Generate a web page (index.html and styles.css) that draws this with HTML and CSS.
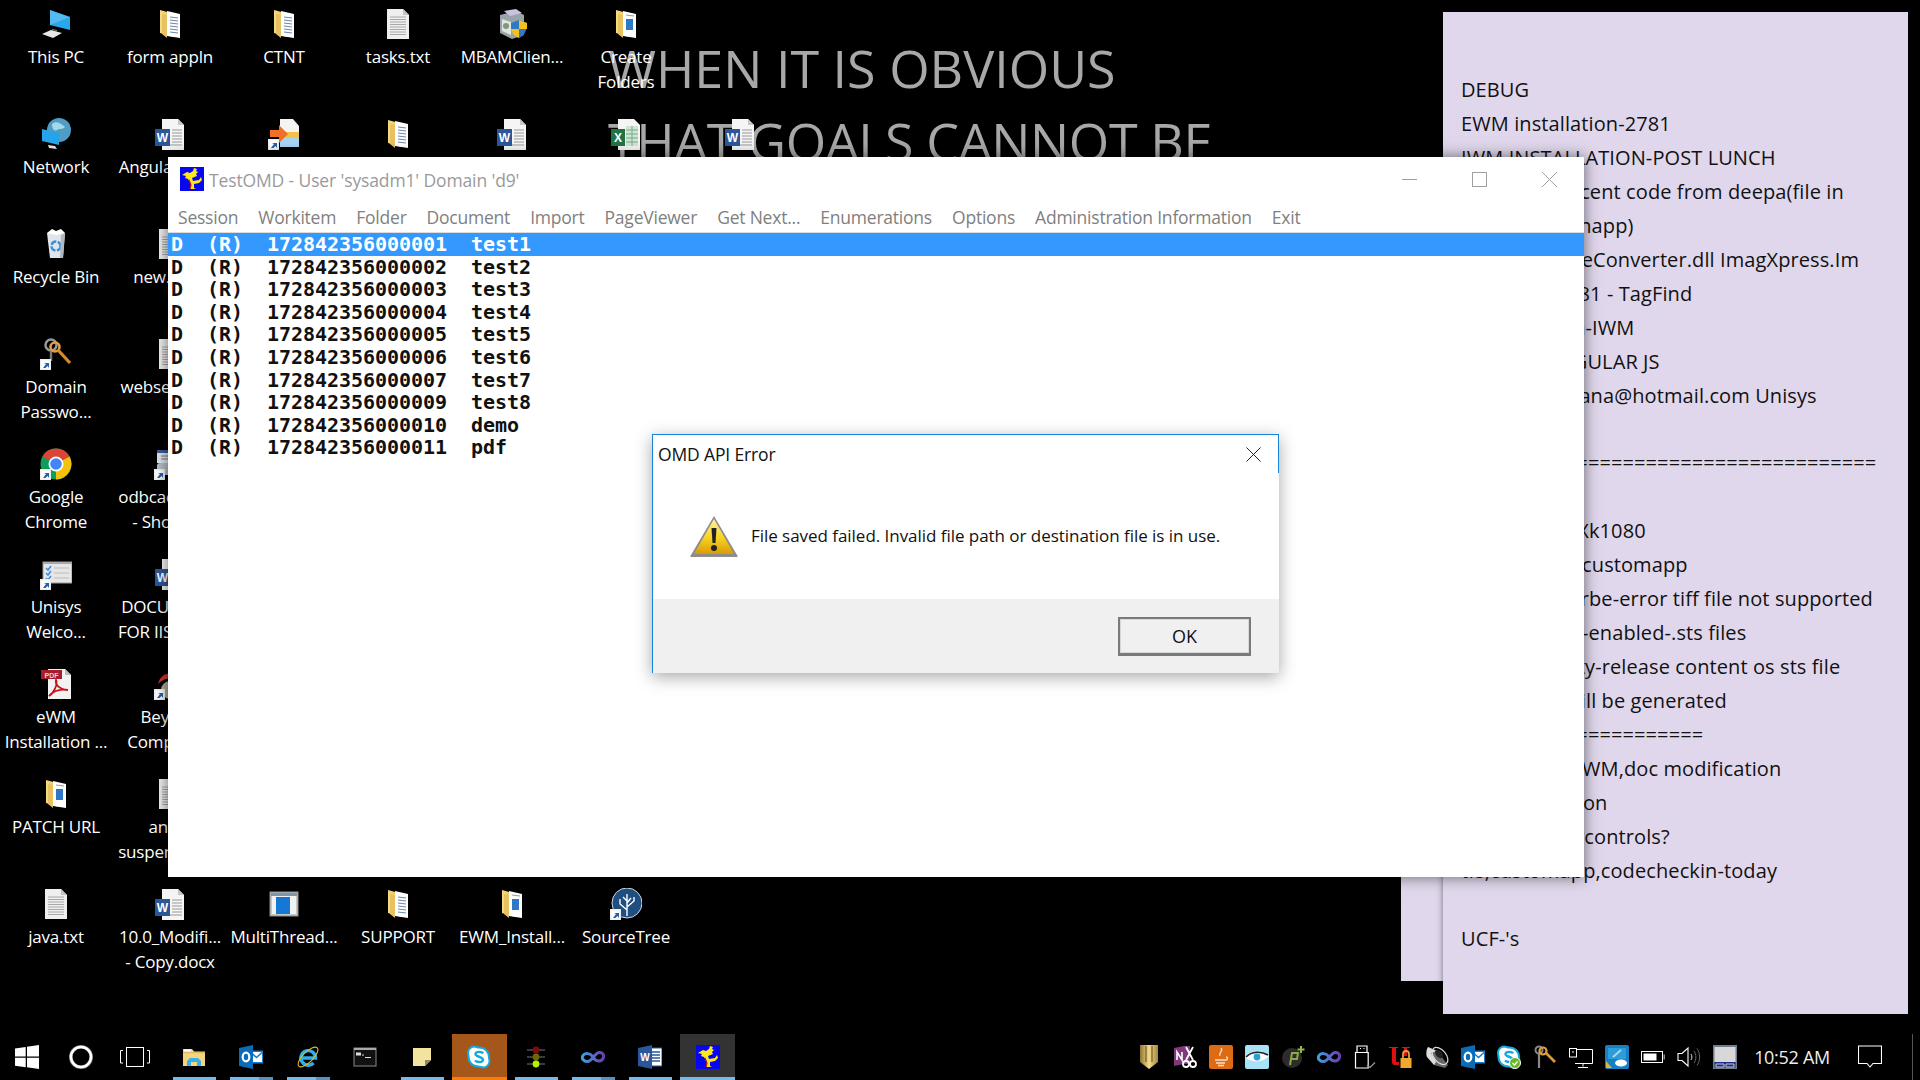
FILE: index.html
```html
<!DOCTYPE html>
<html lang="en">
<head>
<meta charset="utf-8">
<title>TestOMD</title>
<link rel="stylesheet" href="styles.css">
</head>
<body>
<svg class="defs" aria-hidden="true">
<defs>
<linearGradient id="gInf" x1="0" x2="1" y1="0" y2="0"><stop offset="0" stop-color="#3fa0dc"/><stop offset="1" stop-color="#6b3db8"/></linearGradient>
<linearGradient id="gWarn" x1="0" x2="0" y1="0" y2="1"><stop offset="0" stop-color="#fff3a0"/><stop offset=".55" stop-color="#f7d21e"/><stop offset="1" stop-color="#d99a08"/></linearGradient>
<linearGradient id="gGold" x1="0" x2="1" y1="0" y2="0"><stop offset="0" stop-color="#8f7430"/><stop offset=".5" stop-color="#f3dc8f"/><stop offset="1" stop-color="#a5863a"/></linearGradient>
<linearGradient id="gFold" x1="0" x2="1" y1="0" y2="0"><stop offset="0" stop-color="#f7dc82"/><stop offset="1" stop-color="#e8bb52"/></linearGradient>
<symbol id="sc" viewBox="0 0 32 32"><rect x="0" y="21" width="11" height="11" fill="#eee"/><rect x="1.500" y="22.500" width="8" height="8" fill="#fff"/><path d="M3 30l3-4-2-1h5v5l-1.500-2-2 2z" fill="#2a5ea8"/></symbol>
<symbol id="pc" viewBox="0 0 32 32"><path fill="#2aa6ea" d="M10 2 30 9v13L10 17z"/><path fill="#7ed0f7" d="M10 2 30 9 10 17z" opacity=".5"/><path fill="#e8e8e8" d="M2 26l9-4 11 3-9 5z"/><path fill="#888" d="M12 21l5 1 0 1-5-1z"/></symbol>
<symbol id="net" viewBox="0 0 32 32"><circle cx="19" cy="12" r="12" fill="#4f9dc4"/><path d="M12 6c5-4 9 0 13 3-3 3-5 1-8 3s-5-2-5-6z" fill="#a5d8ec"/><path fill="#25a4ea" d="M2 11l17 4v12L2 23z"/><path fill="#ddd" d="M8 27l7 1 2 3-8-1z"/></symbol>
<symbol id="bin" viewBox="0 0 32 32"><path fill="#dfe5ea" d="M7 5l18 0-2 25H10z"/><path fill="#fff" d="M7 5l5-4 4 2 5-2 4 4-9 2z"/><circle cx="16" cy="18" r="4.500" fill="none" stroke="#3a8fd9" stroke-width="2.400" stroke-dasharray="6 1.500"/><path d="M21 7l-1 23h3l2-25z" fill="#aeb8c0"/></symbol>
<symbol id="key" viewBox="0 0 32 32"><circle cx="11" cy="7" r="5.500" fill="none" stroke="#999" stroke-width="2.500"/><path d="M11 11v12" stroke="#777" stroke-width="2.500"/><circle cx="15" cy="9" r="4.500" fill="none" stroke="#e0a040" stroke-width="2.600"/><path d="M18 12l12 13" stroke="#d98a2a" stroke-width="3.200"/></symbol>
<symbol id="chrome" viewBox="0 0 32 32"><circle cx="16" cy="16" r="15.500" fill="#0f9d58"/><path d="M16 16 2.500 8.500A15.500 15.500 0 0 1 29.500 8.500z" fill="#db4437"/><path d="M16 16 29.500 8.500A15.500 15.500 0 0 1 16 31.500z" fill="#f4c20d"/><circle cx="16" cy="16" r="7.500" fill="#fff"/><circle cx="16" cy="16" r="5.800" fill="#4285f4"/></symbol>
<symbol id="uni" viewBox="0 0 32 32"><rect x="3" y="4" width="29" height="21" fill="#e6e6e6" stroke="#999"/><rect x="3" y="4" width="29" height="2" fill="#aaa"/><path d="M14 10h15M14 15h15M14 20h15" stroke="#bbb" stroke-width="1.200"/><path d="M6 10l2 2 3-4M6 15l2 2 3-4M6 20l2 2 3-4" fill="none" stroke="#3a8fd9" stroke-width="1.600"/></symbol>
<symbol id="pdf" viewBox="0 0 32 32"><path fill="#f2f2f2" d="M8 1h17l6 6v24H8z"/><path fill="#bbb" d="M25 1l6 6h-6z"/><rect x="1" y="2" width="21" height="9" fill="#a81b2a"/><text x="11.500" y="9.500" class="tiny" fill="#e8d4c8">PDF</text><path d="M9 28c5-3 9-12 7-16-1 4 2 9 12 10-6-1-14 0-19 6z" fill="none" stroke="#c8131e" stroke-width="1.800"/></symbol>
<symbol id="txt" viewBox="0 0 32 32"><path fill="#efefef" d="M5 1h16l6 6v24H5z"/><path fill="#c4c4c4" d="M21 1l6 6h-6z"/><path d="M8 9h16M8 11.500h16M8 14h16M8 16.500h16M8 19h16M8 21.500h16M8 24h16M8 26.500h16" stroke="#a8a8a8"/></symbol>
<symbol id="doc" viewBox="0 0 32 32"><path fill="#f5f5f5" d="M8 1h16l6 6v25H8z"/><path fill="#c8c8c8" d="M24 1l6 6h-6z"/><path d="M18 12h10M18 15h10M18 18h10M18 21h10M18 24h10M12 27h16" stroke="#999" stroke-width="1.200"/><rect x="1" y="11" width="15" height="17" fill="#2b579a"/><text x="8.500" y="24" class="let" fill="#fff">W</text></symbol>
<symbol id="xls" viewBox="0 0 32 32"><path fill="#f5f5f5" d="M8 1h16l6 6v25H8z"/><path d="M16 8h12v20H16z" fill="#cfe6d5"/><path d="M16 12h12M16 16h12M16 20h12M16 24h12M22 8v20" stroke="#7aa98a"/><rect x="1" y="11" width="14" height="17" fill="#217346"/><text x="8" y="24" class="let" fill="#fff">X</text></symbol>
<symbol id="mbam" viewBox="0 0 32 32"><path fill="#9aa3a8" d="M4 7l16-4 8 4v20l-12 4-12-6z"/><path fill="#c8c4e0" d="M8 3l12-2 6 4-12 3z"/><path fill="#dfe5e0" d="M6 11l9 3v13l-9-4z"/><circle cx="10" cy="18" r="3" fill="#7d9a78"/><path fill="#2f78c8" d="M23 12l8 3c0 8-3 13-8 15z"/><path fill="#f4c020" d="M23 12v9h8c.3-2 0-4 0-6zM23 21v9c-5-2-7-5-8-9z"/><path fill="#2f78c8" d="M23 12l-8 3c0 2 0 4 .2 6H23z"/></symbol>
<symbol id="fold" viewBox="0 0 32 32"><path fill="url(#gFold)" d="M6 2l11 3 2 2v22L6 25z"/><path fill="#fff" d="M13 3l13 3v24l-13-2z"/><path d="M16 9l8 1M16 12l8 1M16 15l8 1M16 18l8 1M16 21l8 1M16 24l8 1" stroke="#6f86a8" stroke-width="1.200"/><path fill="#e8c262" d="M8 6l5 1v23L8 26z"/></symbol>
<symbol id="foldb" viewBox="0 0 32 32"><path fill="url(#gFold)" d="M6 2l11 3 2 2v22L6 25z"/><path fill="#fff" d="M13 3l13 3v24l-13-2z"/><rect x="16" y="11" width="7" height="11" fill="#2f78c8"/><path d="M16 7l8 1" stroke="#999"/><path fill="#e8c262" d="M8 6l5 1v23L8 26z"/></symbol>
<symbol id="inst" viewBox="0 0 32 32"><path fill="#f4f4f4" d="M12 1h13l6 7v21H12z"/><path fill="#f2c14a" d="M12 14h19v6H12z"/><path fill="#a8d4f2" d="M12 20h19v9H12z"/><path fill="#f07028" d="M2 12h9V7l9 9-9 9v-6H2z"/></symbol>
<symbol id="thread" viewBox="0 0 32 32"><rect x="2" y="4" width="28" height="24" fill="#c8c8c8" stroke="#8d8d8d"/><rect x="3" y="5" width="26" height="3" fill="#7f97ab"/><rect x="4" y="8" width="24" height="18" fill="#f2f2f2"/><rect x="8" y="9" width="14" height="17" fill="#1478d4"/></symbol>
<symbol id="stree" viewBox="0 0 32 32"><circle cx="17" cy="15" r="15" fill="#1f4f80"/><circle cx="17" cy="15" r="15" fill="none" stroke="#cfd9e4" stroke-width="1"/><path d="M17 28V6M17 22l-7-6v-5M17 19l7-6V9M17 13l-4-4M17 15l4-5" stroke="#fff" stroke-width="1.400" fill="none"/></symbol>
<symbol id="odbc" viewBox="0 0 32 32"><rect x="3" y="2" width="27" height="13" fill="#dfe5ef"/><rect x="3" y="2" width="27" height="3" fill="#3a5c96"/><path d="M7 8h14M7 11h14" stroke="#777"/><rect x="3" y="15" width="24" height="12" rx="3" fill="#b8bec6"/></symbol>
<symbol id="bc" viewBox="0 0 32 32"><path d="M4 16c2-8 8-12 16-10l-2-5 10 8-10 7-1-5c-5-1-9 1-13 5z" fill="#d23027"/><circle cx="16" cy="22" r="9" fill="#b3a89a"/></symbol>
<symbol id="win" viewBox="0 0 24 24"><path fill="#fff" d="M0 3.400 10.700 2v9.600H0zM12 1.800 24 0v11.600H12zM0 12.800h10.700v9.400L0 20.800zM12 12.800h12V24l-12-1.800z"/></symbol>
<symbol id="cort" viewBox="0 0 24 24"><circle cx="12" cy="12" r="10.200" fill="none" stroke="#888" stroke-width="3.600"/><circle cx="12" cy="12" r="10" fill="none" stroke="#fff" stroke-width="2.400"/></symbol>
<symbol id="tv" viewBox="0 0 30 20"><rect x="6.500" y=".5" width="17" height="19" fill="none" stroke="#fff"/><path d="M3 3.500H.5v12.500H3M27 3.500h2.500v12.500H27" fill="none" stroke="#fff"/></symbol>
<symbol id="expl" viewBox="0 0 24 24"><path fill="#f3d480" d="M1 4h9l2 2.500h11V21H1z"/><path fill="#fff" d="M2 4.500h7v2H2z"/><path fill="#e2b95c" d="M1 7h22v1.200H1z"/><path fill="#38b0e8" d="M5 21v-5l3-3h8l3 3v5h-4v-4H9v4z"/></symbol>
<symbol id="outl" viewBox="0 0 24 24"><rect x="11" y="5.500" width="13" height="13" fill="#1b7cc4"/><path d="M12 7h11v10H12z" fill="#fff"/><path d="M12 7.500l5.500 5 5.500-5" fill="none" stroke="#1b7cc4" stroke-width="1.600"/><path fill="#0a6cb8" d="M0 3 14 0v24L0 21z"/><ellipse cx="7" cy="12" rx="3.300" ry="4.400" fill="none" stroke="#fff" stroke-width="2.200"/></symbol>
<symbol id="ie" viewBox="0 0 24 24"><path d="M6 13h13.500a7.300 7.300 0 1 0-2 5" fill="none" stroke="#2cb0ea" stroke-width="3.400"/><ellipse cx="12" cy="12" rx="13" ry="5" transform="rotate(-45 12 12)" fill="none" stroke="#e8b820" stroke-width="1.100"/></symbol>
<symbol id="cmd" viewBox="0 0 24 24"><rect x="1" y="3" width="22" height="18" fill="#111" stroke="#888"/><rect x="1" y="3" width="22" height="2" fill="#aaa"/><path d="M3 7.500h5v3H3zM9 9.500h2v1H9zM12 12h6v1h-6z" fill="#ddd"/></symbol>
<symbol id="stick" viewBox="0 0 24 24"><path fill="#f2e4a0" d="M3 3h18v12l-6 6H3z"/><path fill="#8c8566" d="M21 15h-6v6z"/></symbol>
<symbol id="sky" viewBox="0 0 24 24"><path d="M7 1.500c2 0 3 1 5 1 6 0 10 4 10 10 0 1 .5 2 .5 4 0 3-3 6-6 6-2 0-3-1-5-1-6 0-10-4-10-10 0-1-.5-2-.5-4 0-3 3-6 6-6z" fill="#fff" stroke="#14a8e0" stroke-width="2"/><path d="M16 8.500c-1-2-7-2.500-7.500.5-.4 3 7.700 2.500 7.500 6-.2 2.700-6.200 2.500-8 .5" fill="none" stroke="#14a8e0" stroke-width="2.400"/></symbol>
<symbol id="tl" viewBox="0 0 24 24"><path d="M3 5h18M3 12h18M3 19h18" stroke="#777" stroke-width="1.200"/><circle cx="12" cy="5" r="3.400" fill="#7d0c0c"/><circle cx="12" cy="12" r="3.400" fill="#6a6a00"/><circle cx="12" cy="19" r="3.400" fill="#b4f000"/></symbol>
<symbol id="inf" viewBox="0 0 24 24"><path d="M12 12C9.500 8 4 7.500 2 10.500S3 17 7 16.500s7-8.500 11-9 5.500 3 4 6-7 4-10-1.500" fill="none" stroke="url(#gInf)" stroke-width="3"/></symbol>
<symbol id="wrd" viewBox="0 0 24 24"><rect x="11" y="3" width="13" height="18" fill="#fff" stroke="#2b579a"/><path d="M14 7h8M14 10h8M14 13h8M14 16h8" stroke="#2b579a" stroke-width="1.300"/><path fill="#2b579a" d="M0 3 14 0v24L0 21z"/><text x="7" y="16" class="letb" fill="#fff">W</text></symbol>
<symbol id="bird" viewBox="0 0 24 24"><rect width="24" height="24" fill="#0606f0"/><path fill="#ffe81a" d="M14 1l3 1-1 2 2 1-2 2 1 2-5 2 1 3 6-1 2-3 1 3-3 3-5 1 0 4 2 1-6 0 1-5-3-5-3-1 1-2-4-1 5-3 3 1 3-2z"/><path d="M9 13l2 5-1 4" stroke="#b01818" stroke-width="1.200" fill="none"/></symbol>
<symbol id="shield" viewBox="0 0 24 24"><path fill="url(#gGold)" d="M3 0h18v17l-9 7-9-7z"/><path d="M9 1v16M15 1v16" stroke="#7d6428" stroke-width="1.300"/></symbol>
<symbol id="one" viewBox="0 0 24 24"><path fill="#80397b" d="M1 3 11 1h6v18H11L1 21z"/><path d="M4 15V7l5 8V7" stroke="#fff" stroke-width="1.600" fill="none"/><path d="M13 2l7 13M20 2l-7 13" stroke="#fff" stroke-width="1.800"/><circle cx="13" cy="19" r="3" fill="none" stroke="#fff" stroke-width="1.800"/><circle cx="20" cy="19" r="3" fill="none" stroke="#fff" stroke-width="1.800"/></symbol>
<symbol id="java" viewBox="0 0 24 24"><rect width="24" height="24" rx="2" fill="#dd6a14"/><path d="M12 3c3 3-3 5-1 8M6 15h11c2 0 2-3 0-3M7 18h9M9 20.500h6" fill="none" stroke="#fbe0c4" stroke-width="1.400"/></symbol>
<symbol id="eye" viewBox="0 0 24 24"><rect width="24" height="24" rx="2" fill="#a9e2f6"/><path d="M0 12C6 5 17 5 24 11 18 18 6 18 0 12z" fill="#fff"/><path d="M1 12C7 6 16 6 23 10" fill="none" stroke="#222" stroke-width="1.600"/><circle cx="12" cy="12" r="3.400" fill="#2c9fd4"/></symbol>
<symbol id="pplus" viewBox="0 0 24 24"><circle cx="11" cy="13" r="10" fill="#2e2a2e"/><path d="M9 20l2-12h6l-1 6H10" fill="none" stroke="#88aa44" stroke-width="2"/><path d="M20 1v7M16.500 4.500h7" stroke="#90b84e" stroke-width="2"/></symbol>
<symbol id="usb" viewBox="0 0 24 24"><path d="M4 7.500V1h10v6.500M2.500 7.500h12.700V23H2.500z" fill="none" stroke="#fff" stroke-width="1.200"/><path d="M7 3.500h1M10.500 3.500h1" stroke="#fff" stroke-width="1.200"/><path d="M14 20l3 2.500 5-5" fill="none" stroke="#999" stroke-width="1.200"/></symbol>
<symbol id="ulock" viewBox="0 0 24 24"><path fill="#e01010" d="M0 2h9v1H7v14h3v3H6c-2 0-3-1-3-3V3H0zM13 2h8v1h-3v8h-3V3h-2z"/><path d="M14 13v-4c0-4 6-4 6 0v4" fill="none" stroke="#e0a040" stroke-width="1.800"/><rect x="11.500" y="13" width="11" height="10" fill="#f0a830"/></symbol>
<symbol id="spk" viewBox="0 0 24 24"><path fill="#666" d="M3 2l9 4 11 14-3 3-11-3z"/><path fill="#ddd" d="M3 2c-2 3-2 8-1 10l7 8 2-3-5-9 6-2z"/><ellipse cx="15" cy="11" rx="6" ry="10" transform="rotate(-40 15 11)" fill="none" stroke="#ddd" stroke-width="1.200"/><ellipse cx="14" cy="9" rx="3" ry="5" transform="rotate(-40 14 9)" fill="#222"/></symbol>
<symbol id="skyok" viewBox="0 0 24 24"><use href="#sky"/><circle cx="18" cy="18" r="5.500" fill="#6fb52c" stroke="#fff"/><path d="M15.500 18l2 2 3-3.500" stroke="#fff" fill="none" stroke-width="1.200"/></symbol>
<symbol id="keys" viewBox="0 0 24 24"><circle cx="6" cy="5" r="3.500" fill="none" stroke="#888" stroke-width="2"/><path d="M6 8v15" stroke="#888" stroke-width="2.200"/><circle cx="10" cy="6" r="3.500" fill="none" stroke="#e0a040" stroke-width="2.200"/><path d="M13 8l9 9" stroke="#d99a3a" stroke-width="2.600"/></symbol>
<symbol id="netw" viewBox="0 0 24 24"><path d="M6 4.500h17.500v14H6M14 18.500v3M9 22.500h10" fill="none" stroke="#fff"/><rect x=".5" y="3.500" width="7" height="8.500" fill="#000" stroke="#fff"/><path d="M4 6v2" stroke="#fff"/></symbol>
<symbol id="intel" viewBox="0 0 24 24"><rect width="24" height="24" rx="2" fill="#1a7ec2"/><path d="M3 3h18v11H3z" fill="#2f9bd8"/><path d="M8 12l8-7" stroke="#9fdcf5" stroke-width="2"/><ellipse cx="16" cy="18" rx="6" ry="3.500" fill="#fff"/><path d="M1 16l6 7H1z" fill="#d8b93c"/></symbol>
<symbol id="batt" viewBox="0 0 24 24"><rect x=".5" y="6.500" width="21" height="11" fill="none" stroke="#fff"/><rect x="2.500" y="8.500" width="13" height="7" fill="#fff"/><rect x="22.500" y="9.500" width="1.500" height="5" fill="#888"/></symbol>
<symbol id="vol" viewBox="0 0 24 24"><path d="M1 8.500h4l6-5.500v18l-6-5.500H1z" fill="none" stroke="#fff" stroke-width="1.100"/><path d="M14 9c1.200 2 1.200 4 0 6" fill="none" stroke="#ddd"/><path d="M17 6c2.500 3.500 2.500 8.500 0 12M20 3.500c3.500 5 3.500 12 0 17" fill="none" stroke="#666"/></symbol>
<symbol id="tab" viewBox="0 0 24 24"><rect width="24" height="24" fill="#6d7d8f"/><rect x="1.500" y="2" width="21" height="15" fill="#d8d8d8"/><rect x="1.500" y="17" width="21" height="5.500" fill="#1e2a88"/><path d="M3 19h8v3H3zM13 19h8v3h-8z" fill="none" stroke="#c8c8c8"/></symbol>
<symbol id="notif" viewBox="0 0 24 24"><path d="M.5 1h23v17.500H15L12 22l-3-3.500H.5z" fill="none" stroke="#fff" stroke-width="1.100"/></symbol>
<symbol id="warn" viewBox="0 0 48 42"><path d="M24 1 47 40a1 1 0 0 1-1 2H2a1 1 0 0 1-1-2z" fill="#8d8d8d"/><path d="M24 4 44 39H4z" fill="url(#gWarn)"/><path d="M21.500 13h5l-1 15h-3z" fill="#222"/><circle cx="24" cy="33" r="3" fill="#222"/></symbol>
</defs>
</svg>

<div class="screen">
  <div class="desktop">
    <div class="motto">WHEN IT IS OBVIOUS<br><span class="motto2">THAT GOALS CANNOT BE</span></div>
    <div class="icons">
      <div class="di"><svg class="dsvg"><use href="#pc"/></svg><span class="lb">This PC</span></div>
      <div class="di"><svg class="dsvg"><use href="#net"/></svg><span class="lb">Network</span></div>
      <div class="di"><svg class="dsvg"><use href="#bin"/></svg><span class="lb">Recycle Bin</span></div>
      <div class="di"><svg class="dsvg"><use href="#key"/><use href="#sc"/></svg><span class="lb">Domain<br>Passwo...</span></div>
      <div class="di"><svg class="dsvg"><use href="#chrome"/><use href="#sc"/></svg><span class="lb">Google<br>Chrome</span></div>
      <div class="di"><svg class="dsvg"><use href="#uni"/><use href="#sc"/></svg><span class="lb">Unisys<br>Welco...</span></div>
      <div class="di"><svg class="dsvg"><use href="#pdf"/></svg><span class="lb">eWM<br>Installation ...</span></div>
      <div class="di"><svg class="dsvg"><use href="#foldb"/></svg><span class="lb">PATCH URL</span></div>
      <div class="di"><svg class="dsvg"><use href="#txt"/></svg><span class="lb">java.txt</span></div>

      <div class="di"><svg class="dsvg"><use href="#fold"/></svg><span class="lb">form appln</span></div>
      <div class="di"><svg class="dsvg"><use href="#doc"/></svg><span class="lb">AngularJS-B...</span></div>
      <div class="di"><svg class="dsvg"><use href="#txt"/></svg><span class="lb">new.docx</span></div>
      <div class="di"><svg class="dsvg"><use href="#txt"/></svg><span class="lb">webservice...</span></div>
      <div class="di"><svg class="dsvg"><use href="#odbc"/><use href="#sc"/></svg><span class="lb">odbcad32.e...<br>- Shortcut</span></div>
      <div class="di"><svg class="dsvg"><use href="#doc"/></svg><span class="lb">DOCUMEN...<br>FOR IIS 10.0...</span></div>
      <div class="di"><svg class="dsvg"><use href="#bc"/><use href="#sc"/></svg><span class="lb">Beyond<br>Compare 4</span></div>
      <div class="di"><svg class="dsvg"><use href="#txt"/></svg><span class="lb">and a<br>suspended-...</span></div>
      <div class="di"><svg class="dsvg"><use href="#doc"/></svg><span class="lb">10.0_Modifi...<br>- Copy.docx</span></div>

      <div class="di"><svg class="dsvg"><use href="#fold"/></svg><span class="lb">CTNT</span></div>
      <div class="di"><svg class="dsvg"><use href="#inst"/><use href="#sc"/></svg></div>
      <div class="di last"><svg class="dsvg"><use href="#thread"/></svg><span class="lb">MultiThread...</span></div>

      <div class="di"><svg class="dsvg"><use href="#txt"/></svg><span class="lb">tasks.txt</span></div>
      <div class="di"><svg class="dsvg"><use href="#fold"/></svg></div>
      <div class="di last"><svg class="dsvg"><use href="#fold"/></svg><span class="lb">SUPPORT</span></div>

      <div class="di"><svg class="dsvg"><use href="#mbam"/></svg><span class="lb">MBAMClien...</span></div>
      <div class="di"><svg class="dsvg"><use href="#doc"/></svg></div>
      <div class="di last"><svg class="dsvg"><use href="#foldb"/></svg><span class="lb">EWM_Install...</span></div>

      <div class="di"><svg class="dsvg"><use href="#foldb"/></svg><span class="lb">Create<br>Folders</span></div>
      <div class="di"><svg class="dsvg"><use href="#xls"/></svg></div>
      <div class="di last"><svg class="dsvg"><use href="#stree"/><use href="#sc"/></svg><span class="lb">SourceTree</span></div>

      <div class="di second"><svg class="dsvg"><use href="#doc"/></svg></div>
    </div>
  </div>

  <div class="note back"></div>
  <div class="note front">
    <p class="ln">DEBUG</p>
    <p class="ln">EWM installation-2781</p>
    <p class="ln">IWM INSTALLATION-POST LUNCH</p>
    <p class="ln">To get the recent code from deepa(file in</p>
    <p class="ln">Custom, mainapp)</p>
    <p class="ln">Getting ImageConverter.dll ImagXpress.Im</p>
    <p class="ln">Issue no.: 2781 - TagFind</p>
    <p class="ln">Is installation-IWM</p>
    <p class="ln">LEARNT: ANGULAR JS</p>
    <p class="ln">sriramakrishana@hotmail.com Unisys</p>
    <p class="ln">&nbsp;</p>
    <p class="ln">====================================</p>
    <p class="ln">&nbsp;</p>
    <p class="ln">Password is Xk1080</p>
    <p class="ln">Deploys it in customapp</p>
    <p class="ln">Test Here in-rbe-error tiff file not supported</p>
    <p class="ln">Encryption is-enabled-.sts files</p>
    <p class="ln">Verify Security-release content os sts file</p>
    <p class="ln">These logs will be generated</p>
    <p class="ln">=====================</p>
    <p class="ln">Installation EWM,doc modification</p>
    <p class="ln">Documentation</p>
    <p class="ln">check in usercontrols?</p>
    <p class="ln">tfs,customapp,codecheckin-today</p>
    <p class="ln">&nbsp;</p>
    <p class="ln">UCF-'s</p>
  </div>

  <div class="win">
    <div class="win-title">
      <svg class="app-ic"><use href="#bird"/></svg>
      <span class="win-name">TestOMD - User 'sysadm1' Domain 'd9'</span>
      <div class="win-btns">
        <div class="wb"><svg class="wb-ic" viewBox="0 0 15 15"><path d="M0 7.500h15" stroke="#a0a0a0"/></svg></div>
        <div class="wb"><svg class="wb-ic" viewBox="0 0 15 15"><rect x=".5" y=".5" width="14" height="14" fill="none" stroke="#a0a0a0"/></svg></div>
        <div class="wb"><svg class="wb-ic" viewBox="0 0 15 15"><path d="M0 0l15 15M15 0 0 15" stroke="#a0a0a0"/></svg></div>
      </div>
    </div>
    <div class="menu">
      <span class="mi">Session</span>
      <span class="mi">Workitem</span>
      <span class="mi">Folder</span>
      <span class="mi">Document</span>
      <span class="mi">Import</span>
      <span class="mi">PageViewer</span>
      <span class="mi">Get Next...</span>
      <span class="mi">Enumerations</span>
      <span class="mi">Options</span>
      <span class="mi">Administration Information</span>
      <span class="mi">Exit</span>
    </div>
    <div class="list">
      <div class="row sel">D  (R)  172842356000001  test1</div>
      <div class="row">D  (R)  172842356000002  test2</div>
      <div class="row">D  (R)  172842356000003  test3</div>
      <div class="row">D  (R)  172842356000004  test4</div>
      <div class="row">D  (R)  172842356000005  test5</div>
      <div class="row">D  (R)  172842356000006  test6</div>
      <div class="row">D  (R)  172842356000007  test7</div>
      <div class="row">D  (R)  172842356000009  test8</div>
      <div class="row">D  (R)  172842356000010  demo</div>
      <div class="row">D  (R)  172842356000011  pdf</div>
    </div>
  </div>

  <div class="dlg">
    <div class="dlg-title">
      <span class="dlg-name">OMD API Error</span>
      <svg class="dlg-x" viewBox="0 0 15 15"><path d="M.5.500l14 14M14.500.500l-14 14" stroke="#222" stroke-width="1"/></svg>
    </div>
    <div class="dlg-body">
      <svg class="warn"><use href="#warn"/></svg>
      <span class="dlg-msg">File saved failed. Invalid file path or destination file is in use.</span>
    </div>
    <div class="dlg-foot"><div class="ok">OK</div></div>
  </div>

  <div class="taskbar">
    <div class="tb-sys"><svg class="t24"><use href="#win"/></svg></div>
    <div class="tb-sys"><svg class="t24"><use href="#cort"/></svg></div>
    <div class="tb-sys tv"><svg class="tvi"><use href="#tv"/></svg></div>
    <div class="apps">
      <div class="app run"><svg class="t24"><use href="#expl"/></svg></div>
      <div class="app run split"><svg class="t24"><use href="#outl"/></svg></div>
      <div class="app run split"><svg class="t24"><use href="#ie"/></svg></div>
      <div class="app"><svg class="t24"><use href="#cmd"/></svg></div>
      <div class="app run"><svg class="t24"><use href="#stick"/></svg></div>
      <div class="app flash"><svg class="t24"><use href="#sky"/></svg></div>
      <div class="app run"><svg class="t24"><use href="#tl"/></svg></div>
      <div class="app run split"><svg class="t24"><use href="#inf"/></svg></div>
      <div class="app run"><svg class="t24"><use href="#wrd"/></svg></div>
      <div class="app active"><svg class="t24"><use href="#bird"/></svg></div>
    </div>
    <div class="tray">
      <div class="ti"><svg class="t24"><use href="#shield"/></svg></div>
      <div class="ti"><svg class="t24"><use href="#one"/></svg></div>
      <div class="ti"><svg class="t24"><use href="#java"/></svg></div>
      <div class="ti"><svg class="t24"><use href="#eye"/></svg></div>
      <div class="ti"><svg class="t24"><use href="#pplus"/></svg></div>
      <div class="ti"><svg class="t24"><use href="#inf"/></svg></div>
      <div class="ti"><svg class="t24"><use href="#usb"/></svg></div>
      <div class="ti"><svg class="t24"><use href="#ulock"/></svg></div>
      <div class="ti"><svg class="t24"><use href="#spk"/></svg></div>
      <div class="ti"><svg class="t24"><use href="#outl"/></svg></div>
      <div class="ti"><svg class="t24"><use href="#skyok"/></svg></div>
      <div class="ti"><svg class="t24"><use href="#keys"/></svg></div>
      <div class="ti"><svg class="t24"><use href="#netw"/></svg></div>
      <div class="ti"><svg class="t24"><use href="#intel"/></svg></div>
      <div class="ti"><svg class="t24"><use href="#batt"/></svg></div>
      <div class="ti"><svg class="t24"><use href="#vol"/></svg></div>
      <div class="ti"><svg class="t24"><use href="#tab"/></svg></div>
    </div>
    <div class="clock">10:52 AM</div>
    <div class="nc"><svg class="t24"><use href="#notif"/></svg></div>
    <div class="showdesk"></div>
  </div>
</div>
</body>
</html>
```
FILE: styles.css
```css
* { box-sizing: border-box; }
html, body { margin: 0; padding: 0; background: #000; }
.defs { position: absolute; width: 0; height: 0; }
.screen {
  position: relative; width: 1920px; height: 1080px; overflow: hidden;
  background: #000; display: flex; flex-direction: column;
  font-family: "Open Sans", "Noto Sans", sans-serif;
}
.desktop { position: relative; flex: 1; }
.motto {
  position: absolute; left: 608px; top: 31px;
  font-size: 52px; line-height: 73px; color: #a8a8a8; white-space: nowrap;
}
.motto2 { letter-spacing: -.36px; }
.icons {
  position: relative; display: grid; grid-auto-flow: column; margin-left: -1px;
  grid-template-rows: repeat(9, 110px); grid-auto-columns: 114px;
}
.di { display: flex; flex-direction: column; align-items: center; padding-top: 8px; }
.di.last { grid-row: 9; }
.di.second { grid-row: 2; }
.dsvg { width: 32px; height: 32px; flex: none; }
.lb {
  margin-top: 4px; font-size: 17px; line-height: 25px; color: #fff;
  text-align: center; white-space: nowrap; letter-spacing: -.2px;
}
.tiny { font: bold 7px "Liberation Sans", sans-serif; text-anchor: middle; }
.let { font: bold 12px "Liberation Sans", sans-serif; text-anchor: middle; }
.letb { font: bold 10px "Liberation Sans", sans-serif; text-anchor: middle; }

.note { position: absolute; background: #e0d7ec; box-shadow: 0 0 6px rgba(0, 0, 0, .5); }
.note.back { left: 1401px; top: 700px; width: 60px; height: 281px; }
.note.front {
  left: 1443px; top: 12px; width: 465px; height: 1002px;
  padding: 61px 0 0 18px; color: #111;
  font-size: 20px; letter-spacing: .1px; white-space: nowrap; overflow: hidden;
}
.ln { margin: 0; line-height: 33.96px; }

.win {
  position: absolute; left: 168px; top: 157px; width: 1416px; height: 720px;
  background: #fff; display: flex; flex-direction: column;
  box-shadow: 0 0 14px rgba(0, 0, 0, .55);
}
.win-title { height: 44px; display: flex; align-items: center; padding-left: 12px; flex: none; }
.app-ic { width: 24px; height: 24px; flex: none; }
.win-name { margin: 2px 0 0 5px; font-size: 17.500px; color: #9a9a9a; letter-spacing: -.13px; white-space: nowrap; }
.win-btns { margin-left: auto; display: flex; }
.wb { width: 70px; height: 44px; display: flex; align-items: center; justify-content: center; }
.wb-ic { width: 15px; height: 15px; }
.menu {
  height: 32px; flex: none; display: flex; align-items: center; gap: 20px; padding-left: 10px;
  border-bottom: 1px solid #dcdcdc; font-size: 17.500px; color: #7f7f7f; letter-spacing: -.22px;
}
.mi { white-space: nowrap; }
.list { flex: 1; }
.row {
  height: 22.600px; padding-left: 3px;
  font: bold 20px/22.600px "DejaVu Sans Mono", monospace;
  white-space: pre; color: #111; letter-spacing: -.04px;
}
.row.sel { background: #3399ff; color: #fff; }

.dlg {
  position: absolute; left: 652px; top: 434px; width: 627px; height: 239px;
  background: #fff; display: flex; flex-direction: column;
  border-top: 1px solid #1883d7; border-left: 1px solid #1883d7;
  box-shadow: 0 4px 16px rgba(0, 0, 0, .35);
}
.dlg-title {
  height: 38px; flex: none; display: flex; align-items: center; justify-content: space-between;
  padding: 0 17px 0 5px; border-right: 1px solid #1883d7;
}
.dlg-name { font-size: 17.500px; color: #111; letter-spacing: -.15px; }
.dlg-x { width: 15px; height: 15px; }
.dlg-body { height: 126px; flex: none; display: flex; align-items: center; padding-left: 37px; }
.warn { width: 48px; height: 42px; flex: none; }
.dlg-msg { margin: 0 0 2px 13px; font-size: 17px; color: #111; letter-spacing: -.04px; white-space: nowrap; }
.dlg-foot { flex: 1; background: #f0f0f0; display: flex; justify-content: flex-end; align-items: flex-start; padding: 18px 28px 0 0; }
.ok {
  width: 133px; height: 39px; background: #f0f0f0;
  border: 2px solid #7a7a7a; border-bottom-width: 3px;
  box-shadow: inset 0 0 0 1px #d8d8d8;
  display: flex; align-items: center; justify-content: center; font-size: 18px; color: #111;
}

.taskbar { position: relative; height: 46px; flex: none; display: flex; align-items: stretch; }
.tb-sys { width: 54px; display: flex; align-items: center; justify-content: center; }
.t24 { width: 24px; height: 24px; }
.tvi { width: 30px; height: 20px; }
.apps { display: flex; margin-left: 4px; }
.app { position: relative; width: 57px; display: flex; align-items: center; justify-content: center; }
.app .t24 { margin-right: 2px; }
.app.active .t24 { margin-right: 0; }
.app.run::after, .app.flash::after, .app.active::after {
  content: ""; position: absolute; bottom: 0; left: 7px; right: 7px; height: 3px; background: #76b9ed;
}
.app.split::before {
  content: ""; position: absolute; bottom: 0; right: 7px; width: 14px; height: 3px; background: #5a90bd; z-index: 1;
}
.app.flash { background: #a5561b; width: 55px; margin: 0 1px; }
.app.flash::after { left: 0; right: 0; background: #ff7b00; }
.app.active { background: #333; width: 55px; margin: 0 1px; }
.app.active::after { left: 0; right: 0; }
.tray { display: flex; margin-left: auto; }
.ti { width: 36px; display: flex; align-items: center; justify-content: center; }
.clock { width: 98px; display: flex; align-items: center; justify-content: center; color: #eee; font-size: 18px; letter-spacing: -.3px; white-space: nowrap; }
.nc { width: 58px; display: flex; align-items: center; justify-content: center; }
.showdesk { width: 8px; margin-left: 13px; border-left: 1px solid #555; }
```
